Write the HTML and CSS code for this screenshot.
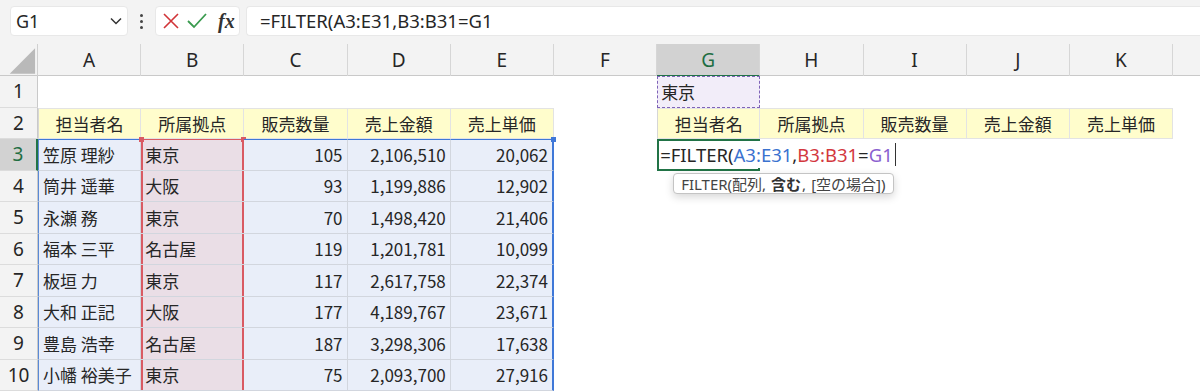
FILE: index.html
```html
<!DOCTYPE html>
<html lang="ja">
<head>
    <meta charset="utf-8">
    <title>FILTER</title>
    <link rel="stylesheet" href="styles.css">
</head>
<body>
    <div class="topbar">
        <div class="namebox">
            <span>G1</span>
            <svg width="14" height="10" viewBox="0 0 14 10"><path d="M2 2.5 L7 7.5 L12 2.5" fill="none" stroke="#333" stroke-width="1.5"/></svg>
        </div>
        <div class="dots"><i></i><i></i><i></i></div>
        <div class="fxbox">
            <svg width="20" height="20" viewBox="0 0 20 20"><path d="M3 3 L17 17 M17 3 L3 17" stroke="#d13438" stroke-width="1.6" fill="none"/></svg>
            <svg width="22" height="20" viewBox="0 0 22 20"><path d="M2 10 L8 16 L20 3" stroke="#3a9b4f" stroke-width="1.8" fill="none"/></svg>
            <span class="fx">fx</span>
        </div>
        <div class="formula">=FILTER(A3:E31,B3:B31=G1</div>
    </div>

    <div class="sheet">
        <div class="row colhead">
            <div class="corner"><svg width="38" height="32" viewBox="0 0 38 32"><path d="M10 30 L36 30 L36 4 Z" fill="#b9b9b9"/></svg></div>
            <div class="ch">A</div><div class="ch">B</div><div class="ch">C</div><div class="ch">D</div>
            <div class="ch">E</div><div class="ch">F</div><div class="ch sel">G</div><div class="ch">H</div>
            <div class="ch">I</div><div class="ch">J</div><div class="ch">K</div><div class="ch last"></div>
        </div>

        <div class="row">
            <div class="rh">1</div>
            <div></div><div></div><div></div><div></div><div></div><div></div>
            <div class="c crit">東京</div>
            <div></div><div></div><div></div><div></div><div></div>
        </div>

        <div class="row">
            <div class="rh">2</div>
            <div class="c hd first">担当者名</div><div class="c hd">所属拠点</div><div class="c hd">販売数量</div>
            <div class="c hd">売上金額</div><div class="c hd">売上単価</div>
            <div></div>
            <div class="c hd first">担当者名</div><div class="c hd">所属拠点</div><div class="c hd">販売数量</div>
            <div class="c hd">売上金額</div><div class="c hd">売上単価</div>
            <div></div>
        </div>

        <div class="row top">
            <div class="rh on">3</div>
            <div class="c d first">笠原 理紗</div>
            <div class="c d loc"><b class="hdl l"></b>東京<b class="hdl r"></b></div>
            <div class="c d n">105</div><div class="c d n">2,106,510</div>
            <div class="c d n end">20,062<b class="hdl blue"></b></div>
            <div></div>
            <div class="c edit">
                <span class="txt">=FILTER(<span class="rb">A3:E31</span>,<span class="rr">B3:B31</span>=<span class="rp">G1</span><span class="caret"></span></span>
                <div class="tip">FILTER(配列,<b>含む</b>,<span class="opt">[空の場合])</span></div>
            </div>
            <div></div><div></div><div></div><div></div><div></div>
        </div>

        <div class="row">
            <div class="rh">4</div>
            <div class="c d first">筒井 遥華</div><div class="c d loc">大阪</div>
            <div class="c d n">93</div><div class="c d n">1,199,886</div><div class="c d n end">12,902</div>
            <div></div><div></div><div></div><div></div><div></div><div></div><div></div>
        </div>

        <div class="row">
            <div class="rh">5</div>
            <div class="c d first">永瀬 務</div><div class="c d loc">東京</div>
            <div class="c d n">70</div><div class="c d n">1,498,420</div><div class="c d n end">21,406</div>
            <div></div><div></div><div></div><div></div><div></div><div></div><div></div>
        </div>

        <div class="row">
            <div class="rh">6</div>
            <div class="c d first">福本 三平</div><div class="c d loc">名古屋</div>
            <div class="c d n">119</div><div class="c d n">1,201,781</div><div class="c d n end">10,099</div>
            <div></div><div></div><div></div><div></div><div></div><div></div><div></div>
        </div>

        <div class="row">
            <div class="rh">7</div>
            <div class="c d first">板垣 力</div><div class="c d loc">東京</div>
            <div class="c d n">117</div><div class="c d n">2,617,758</div><div class="c d n end">22,374</div>
            <div></div><div></div><div></div><div></div><div></div><div></div><div></div>
        </div>

        <div class="row">
            <div class="rh">8</div>
            <div class="c d first">大和 正記</div><div class="c d loc">大阪</div>
            <div class="c d n">177</div><div class="c d n">4,189,767</div><div class="c d n end">23,671</div>
            <div></div><div></div><div></div><div></div><div></div><div></div><div></div>
        </div>

        <div class="row">
            <div class="rh">9</div>
            <div class="c d first">豊島 浩幸</div><div class="c d loc">名古屋</div>
            <div class="c d n">187</div><div class="c d n">3,298,306</div><div class="c d n end">17,638</div>
            <div></div><div></div><div></div><div></div><div></div><div></div><div></div>
        </div>

        <div class="row">
            <div class="rh">10</div>
            <div class="c d first">小幡 裕美子</div><div class="c d loc">東京</div>
            <div class="c d n">75</div><div class="c d n">2,093,700</div><div class="c d n end">27,916</div>
            <div></div><div></div><div></div><div></div><div></div><div></div><div></div>
        </div>
    </div>
</body>
</html>
```

FILE: styles.css
```css
body {
    margin: 0;
    width: 1200px;
    height: 391px;
    overflow: hidden;
    background: #fff;
    color: #262626;
    font-family: "Noto Sans CJK JP", "Noto Sans", sans-serif;
}

/* formula bar */
.topbar {
    display: flex;
    align-items: flex-start;
    height: 44px;
    padding: 6px 0 0 10px;
    box-sizing: border-box;
    background: #f3f3f3;
}

.namebox {
    width: 118px;
    height: 30px;
    box-sizing: border-box;
    background: #fff;
    border: 1px solid #e8e8e8;
    border-radius: 4px;
    display: flex;
    align-items: center;
    justify-content: space-between;
    padding: 0 4px 0 5px;
    font-family: "Noto Sans", sans-serif;
    font-size: 18px;
}

.dots {
    width: 27px;
    height: 30px;
    display: flex;
    flex-direction: column;
    align-items: center;
    justify-content: center;
    gap: 3px;
}

.dots i {
    width: 3px;
    height: 3px;
    border-radius: 50%;
    background: #444;
}

.fxbox {
    width: 85px;
    height: 30px;
    box-sizing: border-box;
    background: #fff;
    border: 1px solid #e8e8e8;
    border-radius: 4px;
    display: flex;
    align-items: center;
    gap: 5px;
    padding-left: 5px;
}

.fx {
    font-family: "Liberation Serif", serif;
    font-style: italic;
    font-weight: bold;
    font-size: 20px;
    margin-left: 5px;
    color: #333;
}

.formula {
    flex: 1;
    height: 30px;
    margin-left: 6px;
    box-sizing: border-box;
    background: #fff;
    border: 1px solid #e8e8e8;
    border-right: none;
    border-radius: 4px 0 0 4px;
    padding-left: 13px;
    line-height: 28px;
    font-family: "Noto Sans", sans-serif;
    font-size: 18.5px;
}

/* grid */
.row {
    display: grid;
    grid-template-columns: 38px repeat(11, 103.2px) 1fr;
    height: 31.5px;
}

.colhead {
    height: 32px;
    background: #f3f3f3;
    border-bottom: 1px solid #c9c9c9;
    box-sizing: border-box;
}

.corner {
    border-right: 1px solid #d0d0d0;
    display: flex;
}

.ch {
    display: flex;
    align-items: center;
    justify-content: center;
    border-right: 1px solid #d6d6d6;
    font-family: "Noto Sans", sans-serif;
    font-size: 19px;
    color: #262626;
}

.ch.last {
    border-right: none;
}

.ch.sel {
    background: #d2d2d2;
    color: #1f6e43;
    border-bottom: 2px solid #217346;
    margin-bottom: -1px;
}

.rh {
    display: flex;
    align-items: center;
    justify-content: center;
    background: #f3f3f3;
    border-right: 1px solid #c9c9c9;
    border-bottom: 1px solid #dcdcdc;
    box-sizing: border-box;
    font-family: "Noto Sans", sans-serif;
    font-size: 19px;
}

.rh.on {
    background: #d2d2d2;
    color: #1f6e43;
    border-right: 2px solid #217346;
}

.c {
    display: flex;
    align-items: center;
    box-sizing: border-box;
    font-size: 17px;
    padding: 0 4px;
    white-space: nowrap;
    position: relative;
}

.crit {
    background: #f2edf9;
    border: 1.5px dashed #7f63b8;
    padding-left: 3px;
}

.hd {
    justify-content: center;
    background: #fffdcc;
    border-top: 1px solid #e3e3e3;
    border-right: 1px solid #e3e3e3;
    border-bottom: 1px solid #e3e3e3;
}

.hd.first,
.d.first {
    border-left: 1px solid #d6d6d6;
}

.d {
    background: #e9eef9;
    border-right: 1px solid #d2d6de;
    border-bottom: 1px solid #d2d6de;
}

.d.first {
    border-left: 1px solid #5b8ad6;
}

.d.n {
    justify-content: flex-end;
}

.d.end {
    border-right: 2px solid #3f78d8;
}

.d.loc {
    background: #eadee6;
    border-right: none;
    box-shadow: inset 2px 0 #d95a63, inset -2px 0 #d95a63;
}

.top .d {
    border-top: 1.5px solid #3f78d8;
}

.top .d.loc {
    border-top: 1.5px solid #d95a63;
}

.hdl {
    position: absolute;
    top: -3px;
    width: 5px;
    height: 5px;
    background: #d95a63;
}

.hdl.l { left: -2px; }
.hdl.r { right: -2px; }

.hdl.blue {
    right: -4px;
    background: #3f78d8;
}

/* cell being edited */
.edit {
    border: 2px solid #217346;
    padding: 0;
    overflow: visible;
    z-index: 2;
}

.txt {
    display: flex;
    align-items: center;
    height: 27px;
    padding: 0 2px 0 1px;
    background: #fff;
    font-family: "Noto Sans", sans-serif;
    font-size: 18.5px;
    margin-right: -140px;
    position: relative;
    z-index: 2;
}

.rb { color: #3a72cf; }
.rr { color: #d3383e; }
.rp { color: #8a5fcf; }

.caret {
    width: 0;
    height: 23px;
    margin-left: 2px;
    border-left: 1.5px solid #333;
}

.tip {
    position: absolute;
    left: 14px;
    top: 32px;
    height: 21px;
    padding: 0 7px;
    box-sizing: border-box;
    display: flex;
    align-items: center;
    background: #fff;
    border: 1px solid #c4c4c4;
    border-radius: 4px;
    box-shadow: 0 3px 8px rgba(0, 0, 0, 0.16);
    font-family: "Noto Sans", "Noto Sans CJK JP", sans-serif;
    font-size: 15px;
    color: #444;
    white-space: nowrap;
    z-index: 3;
}

.tip b {
    margin: 0 1px 0 5px;
    color: #333;
}

.tip .opt {
    margin-left: 5px;
}
```
